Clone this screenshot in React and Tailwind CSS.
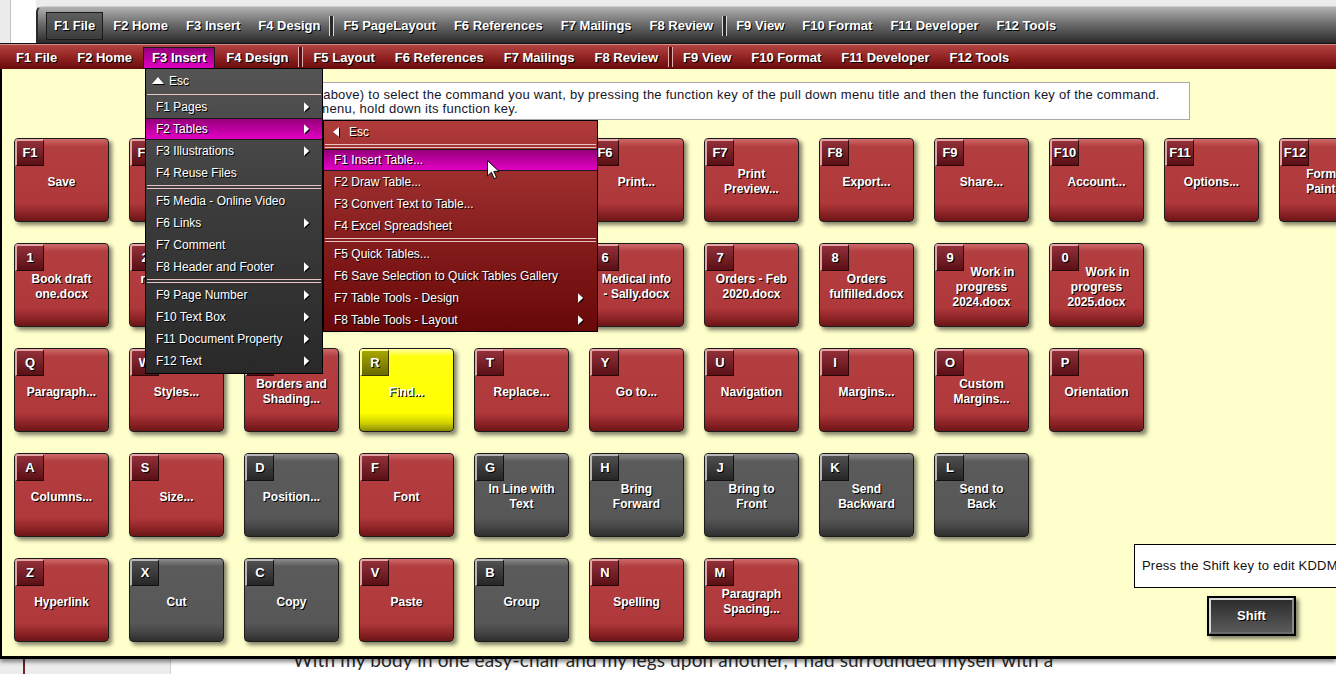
const ts = '[text-shadow:1px_1px_0_#000]';

const topItems = ['F1 File', 'F2 Home', 'F3 Insert', 'F4 Design', '|', 'F5 PageLayout', 'F6 References', 'F7 Mailings', 'F8 Review', '|', 'F9 View', 'F10 Format', 'F11 Developer', 'F12 Tools'];
const barItems = ['F1 File', 'F2 Home', 'F3 Insert', 'F4 Design', '|', 'F5 Layout', 'F6 References', 'F7 Mailings', 'F8 Review', '|', 'F9 View', 'F10 Format', 'F11 Developer', 'F12 Tools'];

const rows = [
  [['F1', ['Save']], ['F2', ['Open...']], ['F3', ['Save As...']], ['F4', ['Close']], ['F5', ['New...']], ['F6', ['Print...']], ['F7', ['Print', 'Preview...']], ['F8', ['Export...']], ['F9', ['Share...']], ['F10', ['Account...']], ['F11', ['Options...']], ['F12', ['Format', 'Painter']]],
  [['1', ['Book draft', 'one.docx']], ['2', ['reunion plan', 'notes.docx']], ['3', ['Chapter', 'two.docx']], ['4', ['Letter to', 'Bob.docx']], ['5', ['Budget', '2023.docx']], ['6', ['Medical info', '- Sally.docx']], ['7', ['Orders - Feb', '2020.docx']], ['8', ['Orders', 'fulfilled.docx']], ['9', ['Work in', 'progress', '2024.docx'], 'red', true], ['0', ['Work in', 'progress', '2025.docx'], 'red', true]],
  [['Q', ['Paragraph...']], ['W', ['Styles...']], ['E', ['Borders and', 'Shading...']], ['R', ['Find...'], 'yellow'], ['T', ['Replace...']], ['Y', ['Go to...']], ['U', ['Navigation']], ['I', ['Margins...']], ['O', ['Custom', 'Margins...']], ['P', ['Orientation']]],
  [['A', ['Columns...']], ['S', ['Size...']], ['D', ['Position...'], 'gray'], ['F', ['Font']], ['G', ['In Line with', 'Text'], 'gray'], ['H', ['Bring', 'Forward'], 'gray'], ['J', ['Bring to', 'Front'], 'gray'], ['K', ['Send', 'Backward'], 'gray'], ['L', ['Send to', 'Back'], 'gray']],
  [['Z', ['Hyperlink']], ['X', ['Cut'], 'gray'], ['C', ['Copy'], 'gray'], ['V', ['Paste']], ['B', ['Group'], 'gray'], ['N', ['Spelling']], ['M', ['Paragraph', 'Spacing...']]],
];

const bodies = {
  red: 'bg-[linear-gradient(to_bottom,#cf6a6a_0%,#b33e40_9%,#af383a_78%,#8e2427_90%,#6c1517_100%)]',
  gray: 'bg-[linear-gradient(to_bottom,#8c8c8c_0%,#5b5b5b_9%,#575757_78%,#444444_90%,#2e2e2e_100%)]',
  yellow: 'bg-[linear-gradient(to_bottom,#ffffa0_0%,#ffff10_9%,#ffff00_78%,#d2d200_90%,#8a8a00_100%)]',
};
const badges = {
  red: 'bg-[linear-gradient(to_bottom,#93303a,#5a1015)] border-l-[#e4a4a4] border-t-[#e4a4a4] border-r-[#2a0606] border-b-[#2a0606]',
  gray: 'bg-[linear-gradient(to_bottom,#505050,#262626)] border-l-[#b8b8b8] border-t-[#b8b8b8] border-r-[#111] border-b-[#111]',
  yellow: 'bg-[linear-gradient(to_bottom,#a6a600,#6a6a00)] border-l-[#ffff9a] border-t-[#ffff9a] border-r-[#3a3a00] border-b-[#3a3a00]',
};

const insertItems = [
  ['F1 Pages', true], ['F2 Tables', true, true], ['F3 Illustrations', true], ['F4 Reuse Files'], 'sep',
  ['F5 Media - Online Video'], ['F6 Links', true], ['F7 Comment'], ['F8 Header and Footer', true], 'sep',
  ['F9 Page Number', true], ['F10 Text Box', true], ['F11 Document Property', true], ['F12 Text', true],
];
const tableItems = [
  ['F1 Insert Table...', false, true], ['F2 Draw Table...'], ['F3 Convert Text to Table...'], ['F4 Excel Spreadsheet'], 'sep',
  ['F5 Quick Tables...'], ['F6 Save Selection to Quick Tables Gallery'], ['F7 Table Tools - Design', true], ['F8 Table Tools - Layout', true],
];

function BarSep({ light }) {
  return <div className={`-mx-[1px] h-[20px] w-[5px] self-center border-x ${light ? 'border-[#d8d8d8] bg-[#2a2a2a]' : 'border-[#e2b0b0] bg-[#5a0c0c]'}`} />;
}

function TopBar() {
  return (
    <div className="flex h-[44px] border-b border-[#111] bg-[#ececec]">
      <div className="ml-[10px] w-px bg-[#c4c4c4]" />
      <div className="w-[25px] bg-white" />
      <div className="mt-[6px] flex flex-1 items-center gap-[2px] rounded-tl-[6px] border-l-2 border-t border-l-[#2a2a2a] border-t-[#cfcfcf] bg-[linear-gradient(to_bottom,#b2b2b2,#6e6e6e_45%,#2a2a2a)] pl-[8px] pt-[1px]">
        {topItems.map((t, i) =>
          t === '|' ? (
            <BarSep key={i} light />
          ) : (
            <div key={i} className={`flex h-[28px] items-center whitespace-nowrap text-[13px] font-bold text-white ${ts} ${i === 0 ? 'border border-[#1a1a1a] bg-[linear-gradient(to_bottom,#5e5e5e,#3c3c3c)] px-[7px]' : 'px-[8px]'}`}>
              {t}
            </div>
          )
        )}
      </div>
    </div>
  );
}

function MenuBar() {
  return (
    <div className="flex h-[25px] items-end gap-[2px] border-t border-[#d68c8c] bg-[linear-gradient(to_bottom,#b44444,#8e2020_55%,#6a0c0c)] pl-[7px]">
      {barItems.map((t, i) =>
        t === '|' ? (
          <BarSep key={i} />
        ) : (
          <div key={i} className={`flex h-[22px] items-center whitespace-nowrap text-[13px] font-bold text-white ${ts} ${t === 'F3 Insert' ? 'border border-[#1a1a1a] bg-[linear-gradient(to_bottom,#94007a,#e000c2)] px-[8px]' : 'px-[9px]'}`}>
            {t}
          </div>
        )
      )}
    </div>
  );
}

function Key({ k, lines, color = 'red', indent }) {
  return (
    <div className={`relative h-[84px] w-[95px] rounded-[4px] border border-[#1c1c1c] ${bodies[color]} shadow-[3px_3px_4px_rgba(0,0,0,0.5)]`}>
      <div className={`absolute left-0 top-0 flex h-[27px] w-[29px] items-center justify-center rounded-tl-[3px] border-b border-l-2 border-r border-t-2 text-[13px] font-bold text-white ${ts} ${badges[color]}`}>
        {k}
      </div>
      <div className={`flex h-full flex-col items-center justify-center pt-[4px] text-center text-[12px] font-bold leading-[15px] text-white ${ts}`}>
        {lines.map((l, i) => (
          <div key={i} className={`whitespace-nowrap ${indent && i === 0 ? 'pl-[22px]' : ''}`}>
            {l}
          </div>
        ))}
      </div>
    </div>
  );
}

function Panel() {
  return (
    <div className="relative z-10 h-[590px] overflow-hidden border-b-[3px] border-l-2 border-black bg-[#ffffcc] pt-[13px] shadow-[0_3px_4px_rgba(0,0,0,0.45)]">
      <div className="ml-[152px] h-[38px] w-[1036px] border border-[#a8a8a8] bg-white px-[8px] pt-[5px] text-[13px] leading-[14px] tracking-[0.25px] text-[#15152a]">
        <div className="whitespace-nowrap">Use the pull down menus (above) to select the command you want, by pressing the function key of the pull down menu title and then the function key of the command.</div>
        <div className="whitespace-nowrap">To activate any pull down menu, hold down its function key.</div>
      </div>
      <div className="ml-[12px] mt-[18px] grid grid-cols-[repeat(12,95px)] grid-rows-[repeat(5,84px)] gap-x-[20px] gap-y-[21px]">
        <div className="col-span-3 col-start-10 row-span-2 row-start-4 flex flex-col justify-end pb-[6px]">
          <div className="ml-[85px] flex h-[44px] w-[260px] items-center border border-black bg-white pl-[7px] text-[13px] tracking-[0.2px] text-[#111]">
            Press the Shift key to edit KDDM...
          </div>
          <div className="ml-[158px] mt-[8px] flex h-[40px] w-[89px] items-center justify-center border-2 border-black shadow-[3px_3px_4px_rgba(0,0,0,0.5)]">
            <div className={`flex h-full w-full items-center justify-center border-2 border-l-[#d8d8d8] border-t-[#d8d8d8] border-r-[#8a8a8a] border-b-[#6a6a6a] bg-[linear-gradient(to_bottom,#2c2c2c,#5a5a5a)] text-[13px] font-bold text-white ${ts}`}>
              Shift
            </div>
          </div>
        </div>
        {rows.map((row, r) =>
          row.map(([k, lines, color, indent], i) => (
            <div key={`${r}-${i}`} className={i === 0 ? 'col-start-1' : ''}>
              <Key k={k} lines={lines} color={color} indent={indent} />
            </div>
          ))
        )}
      </div>
    </div>
  );
}

function DocStrip() {
  return (
    <div className="flex h-[15px] overflow-hidden">
      <div className="flex w-[171px] shrink-0 border-r border-[#cfcfcf] bg-[#ececec]">
        <div className="ml-[23px] h-full w-[2px] bg-[#6a2222]" />
      </div>
      <div className="-mt-[12px] ml-[122px] whitespace-nowrap font-['Lato',sans-serif] text-[19px] leading-[25px] tracking-[0.15px] text-[#2a2a2a]">
        With my body in one easy-chair and my legs upon another, I had surrounded myself with a
      </div>
    </div>
  );
}

function Arrow() {
  return (
    <svg width="6" height="10" viewBox="0 0 7 11" className="drop-shadow-[1px_1px_0_#000]">
      <path d="M0 0 L6 5.5 L0 11 Z" fill="#fff" />
    </svg>
  );
}

function DoubleSep() {
  return (
    <div className="flex h-[6px] flex-col justify-center gap-[2px] px-[1px]">
      <div className="h-px bg-[#e8c4c4]" />
      <div className="h-px bg-[#e8c4c4]" />
    </div>
  );
}

function MenuRow({ label, sub, hl, pr }) {
  return (
    <div className={`flex h-[22px] items-center justify-between pl-[10px] ${pr} text-[12px] text-white ${ts} ${hl ? 'border-y border-[#1a1a1a] bg-[linear-gradient(to_bottom,#96007a,#e200c4)]' : ''}`}>
      <span className="whitespace-nowrap">{label}</span>
      {sub && <Arrow />}
    </div>
  );
}

function InsertMenu() {
  return (
    <div className="absolute left-[145px] top-[68px] z-20 w-[178px] border border-black bg-[linear-gradient(to_bottom,#545454,#3a3a3a_50%,#292929)] pb-px">
      <div className={`flex h-[23px] items-center gap-[5px] pl-[6px] text-[12px] text-white ${ts}`}>
        <svg width="12" height="7" viewBox="0 0 12 7" className="drop-shadow-[1px_1px_0_#000]">
          <path d="M0 7 L6 0 L12 7 Z" fill="#fff" />
        </svg>
        <span>Esc</span>
      </div>
      <div className="flex h-[4px] flex-col justify-center px-[1px]">
        <div className="h-px bg-[#e8c4c4]" />
      </div>
      {insertItems.map((it, i) =>
        it === 'sep' ? <DoubleSep key={i} /> : <MenuRow key={i} label={it[0]} sub={it[1]} hl={it[2]} pr="pr-[12px]" />
      )}
    </div>
  );
}

function TablesMenu() {
  return (
    <div className="absolute left-[323px] top-[120px] z-20 w-[275px] border border-black bg-[linear-gradient(to_bottom,#b03b3b,#8a2020_50%,#680808)]">
      <div className={`flex h-[22px] items-center gap-[10px] pl-[9px] text-[12px] text-white ${ts}`}>
        <svg width="6" height="10" viewBox="0 0 6 10" className="drop-shadow-[1px_1px_0_#000]">
          <path d="M6 0 L0 5 L6 10 Z" fill="#fff" />
        </svg>
        <span>Esc</span>
      </div>
      <DoubleSep />
      {tableItems.map((it, i) =>
        it === 'sep' ? <DoubleSep key={i} /> : <MenuRow key={i} label={it[0]} sub={it[1]} hl={it[2]} pr="pr-[13px]" />
      )}
    </div>
  );
}

function Cursor() {
  return (
    <svg className="absolute left-[487px] top-[160px] z-30" width="13" height="20" viewBox="0 0 13 20">
      <path d="M0.5 0.5 V16 L4.4 12.3 L7.1 18.6 L9.6 17.5 L6.9 11.4 H12 Z" fill="#fff" stroke="#000" strokeWidth="1" strokeLinejoin="round" />
    </svg>
  );
}

export default function App() {
  return (
    <div className="relative h-[674px] w-[1336px] overflow-hidden bg-white font-['Liberation_Sans',Arial,sans-serif]">
      <TopBar />
      <MenuBar />
      <Panel />
      <DocStrip />
      <InsertMenu />
      <TablesMenu />
      <Cursor />
    </div>
  );
}
